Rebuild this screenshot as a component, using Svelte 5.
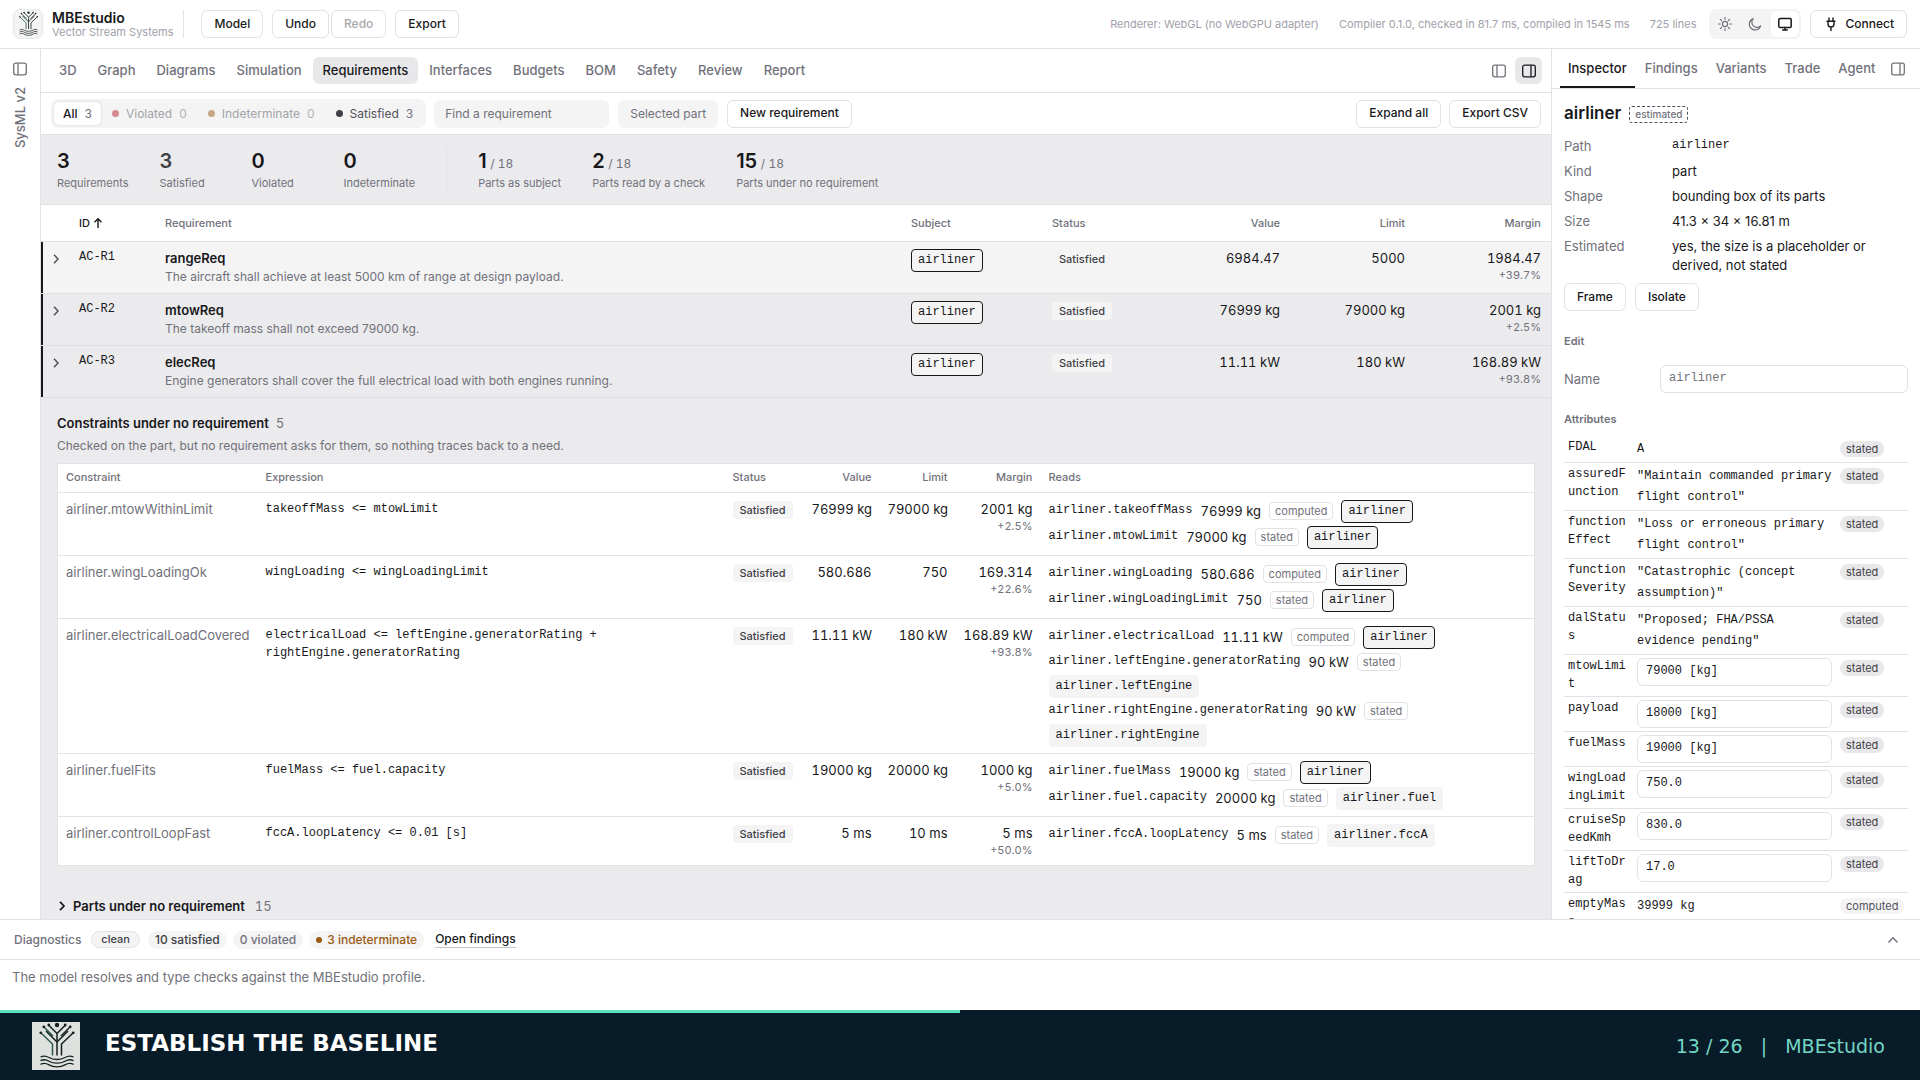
<script lang="ts">
  type Read = { path: string; value: string; origin: string; part: string };

  const tabs = ['3D', 'Graph', 'Diagrams', 'Simulation', 'Requirements', 'Interfaces', 'Budgets', 'BOM', 'Safety', 'Review', 'Report'];
  const sideTabs = ['Inspector', 'Findings', 'Variants', 'Trade', 'Agent'];

  let activeTab = $state('Requirements');
  let activeSide = $state('Inspector');
  let filter = $state('All');
  let query = $state('');

  const filters = [
    { label: 'All', count: 3, dot: '' },
    { label: 'Violated', count: 0, dot: 'red' },
    { label: 'Indeterminate', count: 0, dot: 'amber' },
    { label: 'Satisfied', count: 3, dot: 'dark' },
  ];

  const counts = [
    { n: 3, label: 'Requirements' },
    { n: 3, label: 'Satisfied' },
    { n: 0, label: 'Violated' },
    { n: 0, label: 'Indeterminate' },
  ];
  const coverage = [
    { n: 1, label: 'Parts as subject' },
    { n: 2, label: 'Parts read by a check' },
    { n: 15, label: 'Parts under no requirement' },
  ];

  const requirements = [
    { id: 'AC-R1', name: 'rangeReq', text: 'The aircraft shall achieve at least 5000 km of range at design payload.', value: '6984.47', limit: '5000', margin: '1984.47', pct: '+39.7%' },
    { id: 'AC-R2', name: 'mtowReq', text: 'The takeoff mass shall not exceed 79000 kg.', value: '76999 kg', limit: '79000 kg', margin: '2001 kg', pct: '+2.5%' },
    { id: 'AC-R3', name: 'elecReq', text: 'Engine generators shall cover the full electrical load with both engines running.', value: '11.11 kW', limit: '180 kW', margin: '168.89 kW', pct: '+93.8%' },
  ];

  const constraints: { name: string; expr: string; value: string; limit: string; margin: string; pct: string; reads: Read[] }[] = [
    {
      name: 'airliner.mtowWithinLimit', expr: 'takeoffMass <= mtowLimit',
      value: '76999 kg', limit: '79000 kg', margin: '2001 kg', pct: '+2.5%',
      reads: [
        { path: 'airliner.takeoffMass', value: '76999 kg', origin: 'computed', part: 'airliner' },
        { path: 'airliner.mtowLimit', value: '79000 kg', origin: 'stated', part: 'airliner' },
      ],
    },
    {
      name: 'airliner.wingLoadingOk', expr: 'wingLoading <= wingLoadingLimit',
      value: '580.686', limit: '750', margin: '169.314', pct: '+22.6%',
      reads: [
        { path: 'airliner.wingLoading', value: '580.686', origin: 'computed', part: 'airliner' },
        { path: 'airliner.wingLoadingLimit', value: '750', origin: 'stated', part: 'airliner' },
      ],
    },
    {
      name: 'airliner.electricalLoadCovered', expr: 'electricalLoad <= leftEngine.generatorRating + rightEngine.generatorRating',
      value: '11.11 kW', limit: '180 kW', margin: '168.89 kW', pct: '+93.8%',
      reads: [
        { path: 'airliner.electricalLoad', value: '11.11 kW', origin: 'computed', part: 'airliner' },
        { path: 'airliner.leftEngine.generatorRating', value: '90 kW', origin: 'stated', part: 'airliner.leftEngine' },
        { path: 'airliner.rightEngine.generatorRating', value: '90 kW', origin: 'stated', part: 'airliner.rightEngine' },
      ],
    },
    {
      name: 'airliner.fuelFits', expr: 'fuelMass <= fuel.capacity',
      value: '19000 kg', limit: '20000 kg', margin: '1000 kg', pct: '+5.0%',
      reads: [
        { path: 'airliner.fuelMass', value: '19000 kg', origin: 'stated', part: 'airliner' },
        { path: 'airliner.fuel.capacity', value: '20000 kg', origin: 'stated', part: 'airliner.fuel' },
      ],
    },
    {
      name: 'airliner.controlLoopFast', expr: 'fccA.loopLatency <= 0.01 [s]',
      value: '5 ms', limit: '10 ms', margin: '5 ms', pct: '+50.0%',
      reads: [{ path: 'airliner.fccA.loopLatency', value: '5 ms', origin: 'stated', part: 'airliner.fccA' }],
    },
  ];

  const attributes = [
    { name: 'FDAL', value: 'A', origin: 'stated' },
    { name: 'assuredFunction', value: '"Maintain commanded primary flight control"', origin: 'stated' },
    { name: 'functionEffect', value: '"Loss or erroneous primary flight control"', origin: 'stated' },
    { name: 'functionSeverity', value: '"Catastrophic (concept assumption)"', origin: 'stated' },
    { name: 'dalStatus', value: '"Proposed; FHA/PSSA evidence pending"', origin: 'stated' },
    { name: 'mtowLimit', value: '79000 [kg]', origin: 'stated', edit: true },
    { name: 'payload', value: '18000 [kg]', origin: 'stated', edit: true },
    { name: 'fuelMass', value: '19000 [kg]', origin: 'stated', edit: true },
    { name: 'wingLoadingLimit', value: '750.0', origin: 'stated', edit: true },
    { name: 'cruiseSpeedKmh', value: '830.0', origin: 'stated', edit: true },
    { name: 'liftToDrag', value: '17.0', origin: 'stated', edit: true },
    { name: 'emptyMass', value: '39999 kg', origin: 'computed' },
  ];
</script>

{#snippet tree()}
  <g fill="none" stroke="#15211f" stroke-width="1.5">
    <path d="M9 11L20.500 22V33.500" class="leaf" />
    <path d="M12.500 5.500L21 14" class="leaf" />
    <path d="M17 3.500L25 11.500L33 3.500M25 11.500V33.500" />
    <path d="M37.500 5.500L29 14" />
    <path d="M14 9L25 20M36 9L25 20" />
    <path d="M41 11L29.500 22V33.500" />
  </g>
  <g fill="none" stroke="#15211f" stroke-width="1.3">
    <path d="M8.500 35c4-2 6-1 8.500.500s5 2 8 2 5.500-.500 8-2 4.500-2.500 8.500-.500" />
    <path d="M8.500 38.700c4-2 6-1 8.500.500s5 2 8 2 5.500-.500 8-2 4.500-2.500 8.500-.500" />
    <path d="M8.500 42.400c4-2 6-1 8.500.500s5 2 8 2 5.500-.500 8-2 4.500-2.500 8.500-.500" />
  </g>
  <g fill="#15211f">
    <circle cx="25" cy="3" r="2.200" />
    <circle cx="16.800" cy="3" r="1.400" />
    <circle cx="33.200" cy="3" r="1.400" />
    <circle cx="11.800" cy="4.800" r="1.400" />
    <circle cx="38.200" cy="4.800" r="1.400" />
    <circle cx="8.800" cy="10.800" r="1.400" />
    <circle cx="41.200" cy="10.800" r="1.400" />
  </g>
{/snippet}

{#snippet panelIcon(x: number)}
  <svg width="16" height="16" viewBox="0 0 16 16" fill="none" stroke="currentColor" stroke-width="1.3" aria-hidden="true">
    <rect x="1.700" y="2.200" width="12.600" height="11.600" rx="2" />
    <path d="M{x} 2.200v11.600" />
  </svg>
{/snippet}

<div class="page">
  <div class="app">
    <header class="topbar">
      <span class="logo">
        <svg width="26" height="26" viewBox="0 0 48 48" aria-hidden="true">{@render tree()}</svg>
      </span>
      <div class="brand">
        <strong>MBEstudio</strong>
        <span>Vector Stream Systems</span>
      </div>
      <div class="actions">
        <button class="btn">Model</button>
        <div class="pair">
          <button class="btn">Undo</button>
          <button class="btn" disabled>Redo</button>
        </div>
        <button class="btn">Export</button>
      </div>
      <div class="meta">
        <span>Renderer: WebGL (no WebGPU adapter)</span>
        <span>Compiler 0.1.0, checked in 81.7 ms, compiled in 1545 ms</span>
        <span>725 lines</span>
      </div>
      <div class="theme">
        <button aria-label="Light">
          <svg width="16" height="16" viewBox="0 0 16 16" fill="none" stroke="currentColor" stroke-width="1.2" stroke-linecap="round">
            <circle cx="8" cy="8" r="2.600" />
            <path d="M8 1.500v1.700M8 12.800v1.700M1.500 8h1.700M12.800 8h1.700M3.400 3.400l1.200 1.200M11.400 11.400l1.200 1.200M3.400 12.600l1.200-1.200M11.400 4.600l1.200-1.200" />
          </svg>
        </button>
        <button aria-label="Dark">
          <svg width="16" height="16" viewBox="0 0 16 16" fill="none" stroke="currentColor" stroke-width="1.2" stroke-linejoin="round">
            <path d="M6.300 2.600a5.800 5.800 0 1 0 7.400 7.200A5 5 0 0 1 6.300 2.600z" />
          </svg>
        </button>
        <button aria-label="System" class="on">
          <svg width="16" height="16" viewBox="0 0 16 16" fill="none" stroke="currentColor" stroke-width="1.5" stroke-linecap="round">
            <rect x="1.800" y="2.500" width="12.400" height="9" rx="1.300" />
            <path d="M8 11.500v2.300M5.700 14h4.600" />
          </svg>
        </button>
      </div>
      <button class="btn connect">
        <svg width="16" height="16" viewBox="0 0 16 16" fill="none" stroke="currentColor" stroke-width="1.400" stroke-linecap="round" stroke-linejoin="round" aria-hidden="true">
          <path d="M6 2v3M10 2v3M4 5.300h8M5 5.300v2.700a3 3 0 0 0 6 0V5.300M8 11v3.500" />
        </svg>
        Connect
      </button>
    </header>

    <div class="body">
      <aside class="rail">
        <button class="icon" aria-label="Show source">{@render panelIcon(6)}</button>
        <span>SysML v2</span>
      </aside>

      <main class="main">
        <nav class="tabs">
          {#each tabs as tab}
            <button class="tab" class:on={activeTab === tab} onclick={() => (activeTab = tab)}>{tab}</button>
          {/each}
          <div class="views">
            <button class="icon" aria-label="Left panel">{@render panelIcon(6)}</button>
            <button class="icon on" aria-label="Right panel">{@render panelIcon(10)}</button>
          </div>
        </nav>

        <div class="toolbar">
          <div class="segments">
            {#each filters as f}
              <button class:on={filter === f.label} disabled={f.count === 0} onclick={() => (filter = f.label)}>
                {#if f.dot}<i class="dot {f.dot}"></i>{/if}{f.label}<span>{f.count}</span>
              </button>
            {/each}
          </div>
          <input class="find" type="text" placeholder="Find a requirement" aria-label="Find a requirement" bind:value={query} />
          <button class="soft">Selected part</button>
          <button class="btn">New requirement</button>
          <div class="right">
            <button class="btn">Expand all</button>
            <button class="btn">Export CSV</button>
          </div>
        </div>

        <div class="scroll">
          <div class="summary">
            {#each counts as c, i}
              <div class="stat" class:grey={i === 1}><b>{c.n}</b><span>{c.label}</span></div>
            {/each}
            <div class="rule"></div>
            {#each coverage as c}
              <div class="stat"><div><b>{c.n}</b> <small>/ 18</small></div><span>{c.label}</span></div>
            {/each}
          </div>

          <table class="reqs">
            <colgroup>
              <col class="w-exp" /><col class="w-id" /><col /><col class="w-subj" /><col class="w-stat" /><col class="w-num" /><col class="w-num" /><col class="w-margin" />
            </colgroup>
            <thead>
              <tr>
                <th></th>
                <th class="sorted">ID
                  <svg width="10" height="12" viewBox="0 0 10 12" fill="none" stroke="currentColor" stroke-width="1.400" aria-hidden="true"><path d="M5 11V2M1.500 5.200L5 1.700l3.500 3.500" /></svg>
                </th>
                <th>Requirement</th>
                <th>Subject</th>
                <th>Status</th>
                <th class="num">Value</th>
                <th class="num">Limit</th>
                <th class="num">Margin</th>
              </tr>
            </thead>
            <tbody>
              {#each requirements as r, i}
                <tr class:hover={i === 0}>
                  <td class="exp">
                    <button aria-label="Expand {r.id}">
                      <svg width="12" height="12" viewBox="0 0 12 12" fill="none" stroke="currentColor" stroke-width="1.500"><path d="M4 1.800L8 6l-4 4.200" /></svg>
                    </button>
                  </td>
                  <td class="mono">{r.id}</td>
                  <td><div class="name">{r.name}</div><div class="desc">{r.text}</div></td>
                  <td><button class="chip ring">airliner</button></td>
                  <td><span class="status">Satisfied</span></td>
                  <td class="num">{r.value}</td>
                  <td class="num">{r.limit}</td>
                  <td class="num">{r.margin}<small>{r.pct}</small></td>
                </tr>
              {/each}
            </tbody>
          </table>

          <section class="loose">
            <h2>Constraints under no requirement <span>5</span></h2>
            <p>Checked on the part, but no requirement asks for them, so nothing traces back to a need.</p>
            <table class="cons">
              <colgroup>
                <col class="c-name" /><col class="c-expr" /><col class="c-stat" /><col class="c-num" /><col class="c-num" /><col class="c-margin" /><col />
              </colgroup>
              <thead>
                <tr>
                  <th>Constraint</th>
                  <th>Expression</th>
                  <th>Status</th>
                  <th class="num">Value</th>
                  <th class="num">Limit</th>
                  <th class="num">Margin</th>
                  <th>Reads</th>
                </tr>
              </thead>
              <tbody>
                {#each constraints as c}
                  <tr>
                    <td class="cname">{c.name}</td>
                    <td class="mono">{c.expr}</td>
                    <td><span class="status">Satisfied</span></td>
                    <td class="num">{c.value}</td>
                    <td class="num">{c.limit}</td>
                    <td class="num">{c.margin}<small>{c.pct}</small></td>
                    <td class="reads">
                      <ul>
                        {#each c.reads as read}
                          <li>
                            <code>{read.path}</code>
                            <span class="val">{read.value}</span>
                            <span class="origin">{read.origin}</span>
                            <button class="chip" class:ring={read.part === 'airliner'}>{read.part}</button>
                          </li>
                        {/each}
                      </ul>
                    </td>
                  </tr>
                {/each}
              </tbody>
            </table>
            <button class="more">
              <svg width="12" height="12" viewBox="0 0 12 12" fill="none" stroke="currentColor" stroke-width="1.700" aria-hidden="true"><path d="M3 1.800L7 6l-4 4.200" /></svg>
              Parts under no requirement <span>15</span>
            </button>
          </section>
        </div>
      </main>

      <aside class="side">
        <nav class="side-tabs">
          {#each sideTabs as tab}
            <button class:on={activeSide === tab} onclick={() => (activeSide = tab)}>{tab}</button>
          {/each}
          <button class="icon" aria-label="Hide inspector">{@render panelIcon(10)}</button>
        </nav>
        <div class="inspector">
          <h1>airliner <span class="estimated">estimated</span></h1>
          <dl>
            <dt>Path</dt><dd class="mono">airliner</dd>
            <dt>Kind</dt><dd>part</dd>
            <dt>Shape</dt><dd>bounding box of its parts</dd>
            <dt>Size</dt><dd>41.3 × 34 × 16.81 m</dd>
            <dt>Estimated</dt><dd>yes, the size is a placeholder or derived, not stated</dd>
          </dl>
          <div class="part-actions">
            <button class="btn">Frame</button>
            <button class="btn">Isolate</button>
          </div>
          <h3>Edit</h3>
          <div class="field">
            <label for="part-name">Name</label>
            <input id="part-name" type="text" placeholder="airliner" />
          </div>
          <h3>Attributes</h3>
          <table class="attrs">
            <colgroup><col class="a-name" /><col /><col class="a-origin" /></colgroup>
            <tbody>
              {#each attributes as a}
                <tr>
                  <th scope="row">{a.name}</th>
                  <td>
                    {#if a.edit}
                      <input type="text" value={a.value} aria-label={a.name} />
                    {:else}
                      {a.value}
                    {/if}
                  </td>
                  <td class="from"><span class="tag" class:light={a.origin === 'computed'}>{a.origin}</span></td>
                </tr>
              {/each}
            </tbody>
          </table>
        </div>
      </aside>
    </div>

    <section class="diag">
      <div class="diag-bar">
        <span class="title">Diagnostics</span>
        <span class="pill clean">clean</span>
        <span class="pill">10 satisfied</span>
        <span class="pill muted">0 violated</span>
        <span class="pill warn"><i class="dot"></i>3 indeterminate</span>
        <a href="#findings">Open findings</a>
        <button class="icon" aria-label="Expand diagnostics">
          <svg width="14" height="14" viewBox="0 0 14 14" fill="none" stroke="currentColor" stroke-width="1.400"><path d="M2.500 9.500L7 4.700l4.500 4.800" /></svg>
        </button>
      </div>
      <p>The model resolves and type checks against the MBEstudio profile.</p>
    </section>
  </div>

  <div class="progress"><div style="width: {(13 / 26) * 100}%"></div></div>
  <footer class="caption">
    <svg width="48" height="48" viewBox="0 0 48 48" aria-hidden="true">{@render tree()}</svg>
    <h2>ESTABLISH THE BASELINE</h2>
    <span>13 / 26&nbsp;&nbsp; | &nbsp;&nbsp;MBEstudio</span>
  </footer>
</div>

<style>
  :global(body) { background: #fff; }

  .page {
    display: flex;
    flex-direction: column;
    height: 100vh;
    overflow: hidden;
    font-family: Inter, sans-serif;
    font-size: 13px;
    line-height: 18px;
    color: #18181b;
  }
  .page * { box-sizing: border-box; }
  button, input { font: inherit; color: inherit; margin: 0; }
  button { border: 0; background: none; padding: 0; cursor: pointer; white-space: nowrap; }
  h1, h2, h3, p, ul, dl, dd { margin: 0; padding: 0; }
  svg { display: block; flex: none; }
  table { border-collapse: collapse; table-layout: fixed; width: 100%; }
  th, td { text-align: left; vertical-align: top; }

  .mono, code { font-family: "Liberation Mono", monospace; font-size: 12px; }

  .app { flex: 1; min-height: 0; display: flex; flex-direction: column; }

  .btn {
    height: 28px;
    padding: 0 12px 1px;
    border: 1px solid #e2e2e5;
    border-radius: 6px;
    background: #fff;
    font-size: 12px;
    font-weight: 500;
  }
  .btn:disabled { color: #a8a8ad; }

  .icon {
    display: flex;
    align-items: center;
    justify-content: center;
    width: 27px;
    height: 27px;
    border-radius: 6px;
    color: #71717a;
  }
  .icon.on { background: #e8e8ea; color: #18181b; }

  /* top bar */
  .topbar {
    display: flex;
    align-items: center;
    height: 49px;
    padding: 0 13px;
    border-bottom: 1px solid #e2e2e5;
  }
  .logo {
    display: flex;
    align-items: center;
    justify-content: center;
    width: 30px;
    height: 30px;
    border: 1px solid #e8e8ea;
    border-radius: 7px;
    background: #f4f4f5;
  }
  .brand {
    display: flex;
    flex-direction: column;
    height: 28px;
    margin-left: 9px;
    padding-right: 10px;
    border-right: 1px solid #e2e2e5;
    line-height: 16px;
  }
  .brand strong { font-size: 14px; font-weight: 600; }
  .brand span { font-size: 11px; line-height: 12px; color: #a1a1aa; }
  .actions { display: flex; gap: 9px; margin-left: 17px; }
  .pair { display: flex; gap: 2px; }
  .meta { display: flex; gap: 20px; margin-left: auto; font-size: 11px; color: #a1a1aa; }
  .theme {
    display: flex;
    gap: 2px;
    margin: 0 9px 0 13px;
    padding: 2px;
    border-radius: 7px;
    background: #f4f4f5;
    color: #71717a;
  }
  .theme button {
    display: flex;
    align-items: center;
    justify-content: center;
    width: 28px;
    height: 26px;
    border-radius: 6px;
  }
  .theme .on { background: #fff; color: #18181b; }
  .connect { display: flex; align-items: center; gap: 6px; }

  .body { flex: 1; min-height: 0; display: flex; }

  .rail {
    width: 41px;
    flex: none;
    display: flex;
    flex-direction: column;
    align-items: center;
    gap: 5px;
    padding-top: 6px;
    border-right: 1px solid #e2e2e5;
    color: #71717a;
  }
  .rail span { writing-mode: vertical-rl; transform: rotate(180deg); font-weight: 500; }

  .main { flex: 1; min-width: 0; display: flex; flex-direction: column; }

  .tabs {
    display: flex;
    align-items: center;
    gap: 1px;
    height: 44px;
    flex: none;
    padding: 0 9px 0 8px;
    border-bottom: 1px solid #e2e2e5;
  }
  .tab { height: 27px; padding: 0 10px 2px; border-radius: 6px; font-weight: 500; color: #71717a; }
  .tab.on { background: #e8e8ea; color: #18181b; }
  .views { display: flex; gap: 3px; margin-left: auto; }

  .toolbar {
    display: flex;
    align-items: center;
    height: 42px;
    flex: none;
    padding: 0 10px;
    border-bottom: 1px solid #e2e2e5;
    font-size: 12px;
  }
  .segments { display: flex; height: 29px; padding: 3px; border-radius: 7px; background: #f4f4f5; }
  .segments button {
    display: flex;
    align-items: center;
    gap: 7px;
    padding: 0 10px 0 11px;
    border-radius: 5px;
    color: #52525b;
  }
  .segments button:disabled { opacity: 0.5; }
  .segments .on { padding: 0 9px; background: #fff; color: #18181b; font-weight: 500; box-shadow: 0 0 2px rgba(0, 0, 0, 0.2); }
  .segments button span { font-weight: 400; color: #71717a; }
  .dot { width: 7px; height: 7px; border-radius: 50%; background: #9a5b13; }
  .dot.red { background: #b3202c; }
  .dot.amber { background: #9a5b13; }
  .dot.dark { background: #3f3f46; }
  .find {
    width: 175px;
    height: 28px;
    margin: 0 9px 0 8px;
    padding: 0 11px;
    border: 0;
    border-radius: 6px;
    background: #f4f4f5;
  }
  input::placeholder { color: #71717a; opacity: 1; }
  .soft { height: 28px; margin-right: 9px; padding: 0 12px; border-radius: 6px; background: #f4f4f5; color: #71717a; }
  .right { display: flex; gap: 8px; margin-left: auto; }

  .scroll { flex: 1; min-height: 0; overflow: hidden; background: #ebebed; }

  .summary { display: flex; height: 69px; padding: 13px 16px 0; gap: 31px; }
  .stat { display: flex; flex-direction: column; min-width: 61px; }
  .stat b { font-size: 20px; line-height: 26px; font-weight: 600; }
  .stat span { font-size: 11px; line-height: 18px; color: #71717a; }
  .stat small { font-size: 12px; color: #71717a; }
  .stat.grey b { color: #3f3f46; }
  .rule { width: 1px; height: 44px; background: #e2e2e5; }

  .num { text-align: right; white-space: nowrap; }
  td.num, .val, .more span, .stat small { font-variant-numeric: tabular-nums; }
  .num small { display: block; font-size: 11px; line-height: 16px; color: #71717a; }

  .reqs th {
    height: 37px;
    padding: 0 10px 1px;
    vertical-align: middle;
    border-top: 1px solid #e2e2e5;
    border-bottom: 1px solid #e2e2e5;
    background: #fff;
    font-size: 11px;
    font-weight: 500;
    color: #71717a;
  }
  .reqs th svg { display: inline-block; vertical-align: -2px; }
  .reqs .sorted { color: #18181b; }
  .reqs td { height: 52px; padding: 7px 10px 0; border-bottom: 1px solid #e0e0e3; }
  .reqs td.mono { padding-top: 6px; }
  .reqs .hover td { background: #f4f4f5; }
  .reqs .exp { padding: 9px 0 0 9px; box-shadow: inset 2px 0 #18181b; color: #52525b; }
  .w-exp { width: 28px; }
  .w-id { width: 86px; }
  .w-subj { width: 141px; }
  .w-stat { width: 123px; }
  .w-num { width: 125px; }
  .w-margin { width: 136px; }
  .name { font-weight: 600; }
  .desc, .loose p { font-size: 12px; color: #71717a; }
  .desc { line-height: 20px; }

  .chip {
    height: 23px;
    padding: 0 7px;
    border-radius: 4px;
    background: #f4f4f5;
    font-family: "Liberation Mono", monospace;
    font-size: 12px;
    line-height: 19px;
  }
  .chip.ring { padding: 0 6px; border: 1px solid #18181b; }
  .status {
    display: inline-block;
    padding: 0 7px;
    border-radius: 4px;
    background: #f4f4f5;
    font-size: 11px;
    line-height: 18px;
    font-weight: 500;
    color: #3f3f46;
  }

  .loose { padding: 15px 16px 0; }
  .loose h2 { font-size: 13px; line-height: 20px; font-weight: 600; }
  .loose h2 span, .more span { margin-left: 4px; font-weight: 400; color: #71717a; }
  .loose p { margin: 4px 0 8px; }
  .cons { border: 1px solid #e2e2e5; background: #fff; }
  .cons th { height: 29px; padding: 0 8px 2px; vertical-align: middle; font-size: 11px; font-weight: 500; color: #71717a; }
  .cons td { padding: 7px 8px; border-top: 1px solid #e2e2e5; }
  .cons td.reads { padding: 6px 8px; }
  .cname { color: #71717a; }
  .c-name { width: 200px; }
  .c-expr { width: 467px; }
  .c-stat { width: 79px; }
  .c-num { width: 76px; }
  .c-margin { width: 85px; }
  ul { display: grid; gap: 2px; list-style: none; }
  li { display: flex; flex-wrap: wrap; align-items: center; gap: 2px 8px; min-height: 24px; }
  code { padding-bottom: 2px; line-height: 20px; }
  .origin { padding: 0 5px; border: 1px solid #e2e2e5; border-radius: 4px; font-size: 11px; line-height: 16px; color: #71717a; }
  .more { display: flex; align-items: center; gap: 4px; margin-top: 31px; font-weight: 600; }
  .more span { margin-left: 6px; }

  /* inspector */
  .side { width: 369px; flex: none; display: flex; flex-direction: column; border-left: 1px solid #e2e2e5; }
  .side-tabs { display: flex; gap: 2px; height: 40px; flex: none; padding: 0 9px 0 8px; border-bottom: 1px solid #e2e2e5; }
  .side-tabs button:not(.icon) { padding: 0 8px; border-bottom: 2px solid transparent; font-weight: 500; color: #71717a; }
  .side-tabs button.on:not(.icon) { border-bottom-color: #18181b; color: #18181b; }
  .side-tabs .icon { margin: 6px 0 0 auto; }
  .inspector { flex: 1; min-height: 0; overflow: hidden; padding: 12px 12px 0; }
  .inspector h1 { display: flex; align-items: center; gap: 8px; font-size: 17px; line-height: 24px; font-weight: 600; }
  .estimated {
    margin-top: 2px;
    padding: 0 5px;
    border: 1px dashed #52525b;
    border-radius: 3px;
    font-size: 10px;
    line-height: 15px;
    font-weight: 500;
    color: #71717a;
  }
  dl { display: grid; grid-template-columns: 100px 1fr; gap: 6px 8px; margin-top: 12px; line-height: 19px; }
  dt { color: #71717a; }
  dd.mono { line-height: 17px; }
  .part-actions { display: flex; gap: 9px; margin-top: 8px; }
  h3 { margin-top: 21px; font-size: 11px; line-height: 18px; font-weight: 600; color: #71717a; }
  .field { display: flex; align-items: center; justify-content: space-between; margin: 15px 0 -4px; color: #71717a; }
  .field input { width: 248px; color: #71717a; }
  .field input, .attrs input {
    height: 28px;
    padding: 0 8px 2px;
    border: 1px solid #e2e2e5;
    border-radius: 6px;
    background: #fff;
    font-family: "Liberation Mono", monospace;
    font-size: 12px;
  }
  .attrs { margin-top: 8px; font-family: "Liberation Mono", monospace; font-size: 12px; }
  .attrs tr { border-bottom: 1px solid #e2e2e5; }
  .attrs th { padding: 2px 4px 3px; font-weight: 400; overflow-wrap: anywhere; }
  .attrs td { padding: 3px 4px 2px; line-height: 21px; }
  .attrs .from { padding: 4px 4px 1px; }
  .attrs input { display: block; width: 100%; margin-bottom: 1px; }
  .a-name { width: 69px; }
  .a-origin { width: 72px; }
  .tag {
    display: inline-block;
    padding: 0 6px;
    border-radius: 8px;
    background: #e8e8ea;
    font-family: Inter, sans-serif;
    font-size: 11px;
    line-height: 16px;
    color: #3f3f46;
  }
  .tag.light { background: #f4f4f5; color: #52525b; }

  /* diagnostics */
  .diag { flex: none; height: 91px; border-top: 1px solid #e2e2e5; }
  .diag-bar {
    display: flex;
    align-items: center;
    gap: 6px;
    height: 40px;
    padding: 0 14px;
    border-bottom: 1px solid #e2e2e5;
    font-size: 12px;
    font-weight: 500;
  }
  .title { margin-right: 4px; color: #71717a; }
  .pill { display: flex; align-items: center; gap: 5px; padding: 0 7px; border-radius: 9px; background: #f4f4f5; color: #3f3f46; }
  .pill.clean { margin-right: 2px; padding: 0 9px; border: 1px solid #e2e2e5; font-size: 11px; line-height: 15px; }
  .pill.muted { color: #71717a; }
  .pill.warn { color: #9a5b13; }
  .pill .dot { width: 6px; height: 6px; }
  .diag-bar a { margin-left: 5px; border-bottom: 1px solid #c4c4c8; line-height: 16px; color: #18181b; text-decoration: none; }
  .diag-bar .icon { margin-left: auto; }
  .diag p { padding: 8px 12px; color: #71717a; }

  .progress { flex: none; height: 3px; background: #071b29; }
  .progress div { height: 100%; background: #5fe3bf; }
  .caption {
    flex: none;
    display: flex;
    align-items: center;
    height: 67px;
    padding: 0 35px 2px 32px;
    background: #071b29;
    font-family: "DejaVu Sans", sans-serif;
  }
  .caption svg { background: #dfe1df; }
  .leaf { stroke: #2c5a49; }
  .caption h2 { margin: 0 auto 5px 25px; font-size: 23px; line-height: 30px; font-weight: 700; color: #fff; }
  .caption span { font-size: 19px; line-height: 24px; color: #74d6c4; }
</style>
